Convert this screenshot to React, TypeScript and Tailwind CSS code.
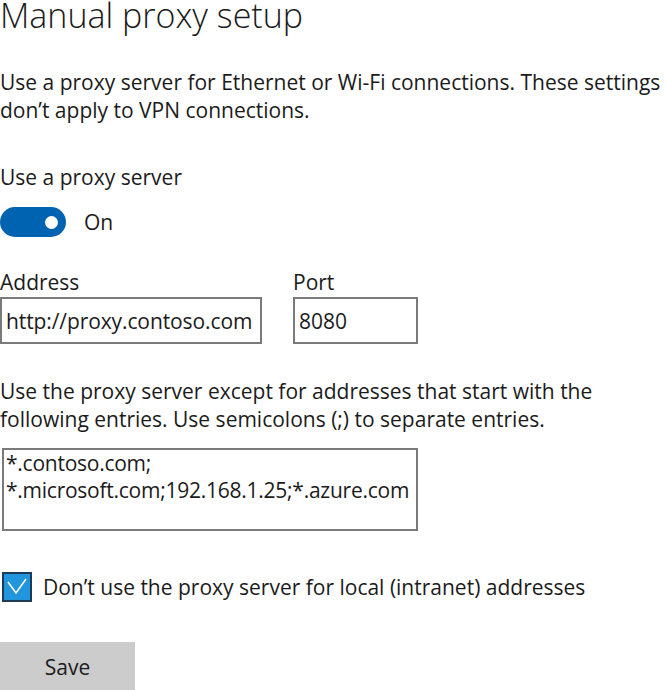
export default function App() {
  return (
    <div
      className="w-[668px] h-[690px] overflow-hidden bg-white text-[#1b1b1b] text-[21px] leading-[28px]"
      style={{ fontFamily: '"Open Sans", "Noto Sans", sans-serif' }}
    >
      <h1 className="text-[34px] leading-[34px] font-light -mt-[2px]">
        Manual proxy setup
      </h1>

      <p className="mt-[36px]">
        Use a proxy server for Ethernet or Wi-Fi connections. These settings
        <br />
        don’t apply to VPN connections.
      </p>

      <div className="mt-[39px]">Use a proxy server</div>

      <div className="mt-[16px] flex items-center gap-[18px]">
        <div className="w-[66px] h-[30px] rounded-full bg-[#0063b1] flex items-center justify-end pr-[8px]">
          <div className="w-[13px] h-[13px] rounded-full bg-white" />
        </div>
        <span>On</span>
      </div>

      <div className="mt-[33px] flex gap-[31px]">
        <div className="flex flex-col">
          <span className="leading-[24px]">Address</span>
          <div className="mt-[3px] w-[262px] h-[47px] border-2 border-[#7a7a7a] flex items-center pl-[4px] whitespace-nowrap tracking-[-0.1px]">
            http://proxy.contoso.com
          </div>
        </div>
        <div className="flex flex-col">
          <span className="leading-[24px]">Port</span>
          <div className="mt-[3px] w-[125px] h-[47px] border-2 border-[#7a7a7a] flex items-center pl-[4px]">
            8080
          </div>
        </div>
      </div>

      <p className="mt-[33px]">
        Use the proxy server except for addresses that start with the
        <br />
        following entries. Use semicolons (;) to separate entries.
      </p>

      <div className="mt-[15px] ml-[2px] w-[416px] h-[83px] border-2 border-[#7a7a7a] pl-[2px] leading-[27px] whitespace-nowrap overflow-hidden tracking-[-0.25px]">
        <div>*.contoso.com;</div>
        <div>*.microsoft.com;192.168.1.25;*.azure.com</div>
      </div>

      <div className="mt-[41px] flex items-center gap-[11px]">
        <div className="ml-[2px] w-[30px] h-[30px] bg-[#2196dc] border-2 border-[#1d3b57] flex items-center justify-center">
          <svg width="22" height="18" viewBox="0 0 22 18" fill="none">
            <path d="M2 4 L10 15 L20 1" stroke="white" strokeWidth="1.6" />
          </svg>
        </div>
        <span>Don’t use the proxy server for local (intranet) addresses</span>
      </div>

      <button className="mt-[40px] w-[135px] h-[50px] bg-[#cccccc] text-[#1b1b1b] flex items-center justify-center">
        Save
      </button>
    </div>
  );
}
